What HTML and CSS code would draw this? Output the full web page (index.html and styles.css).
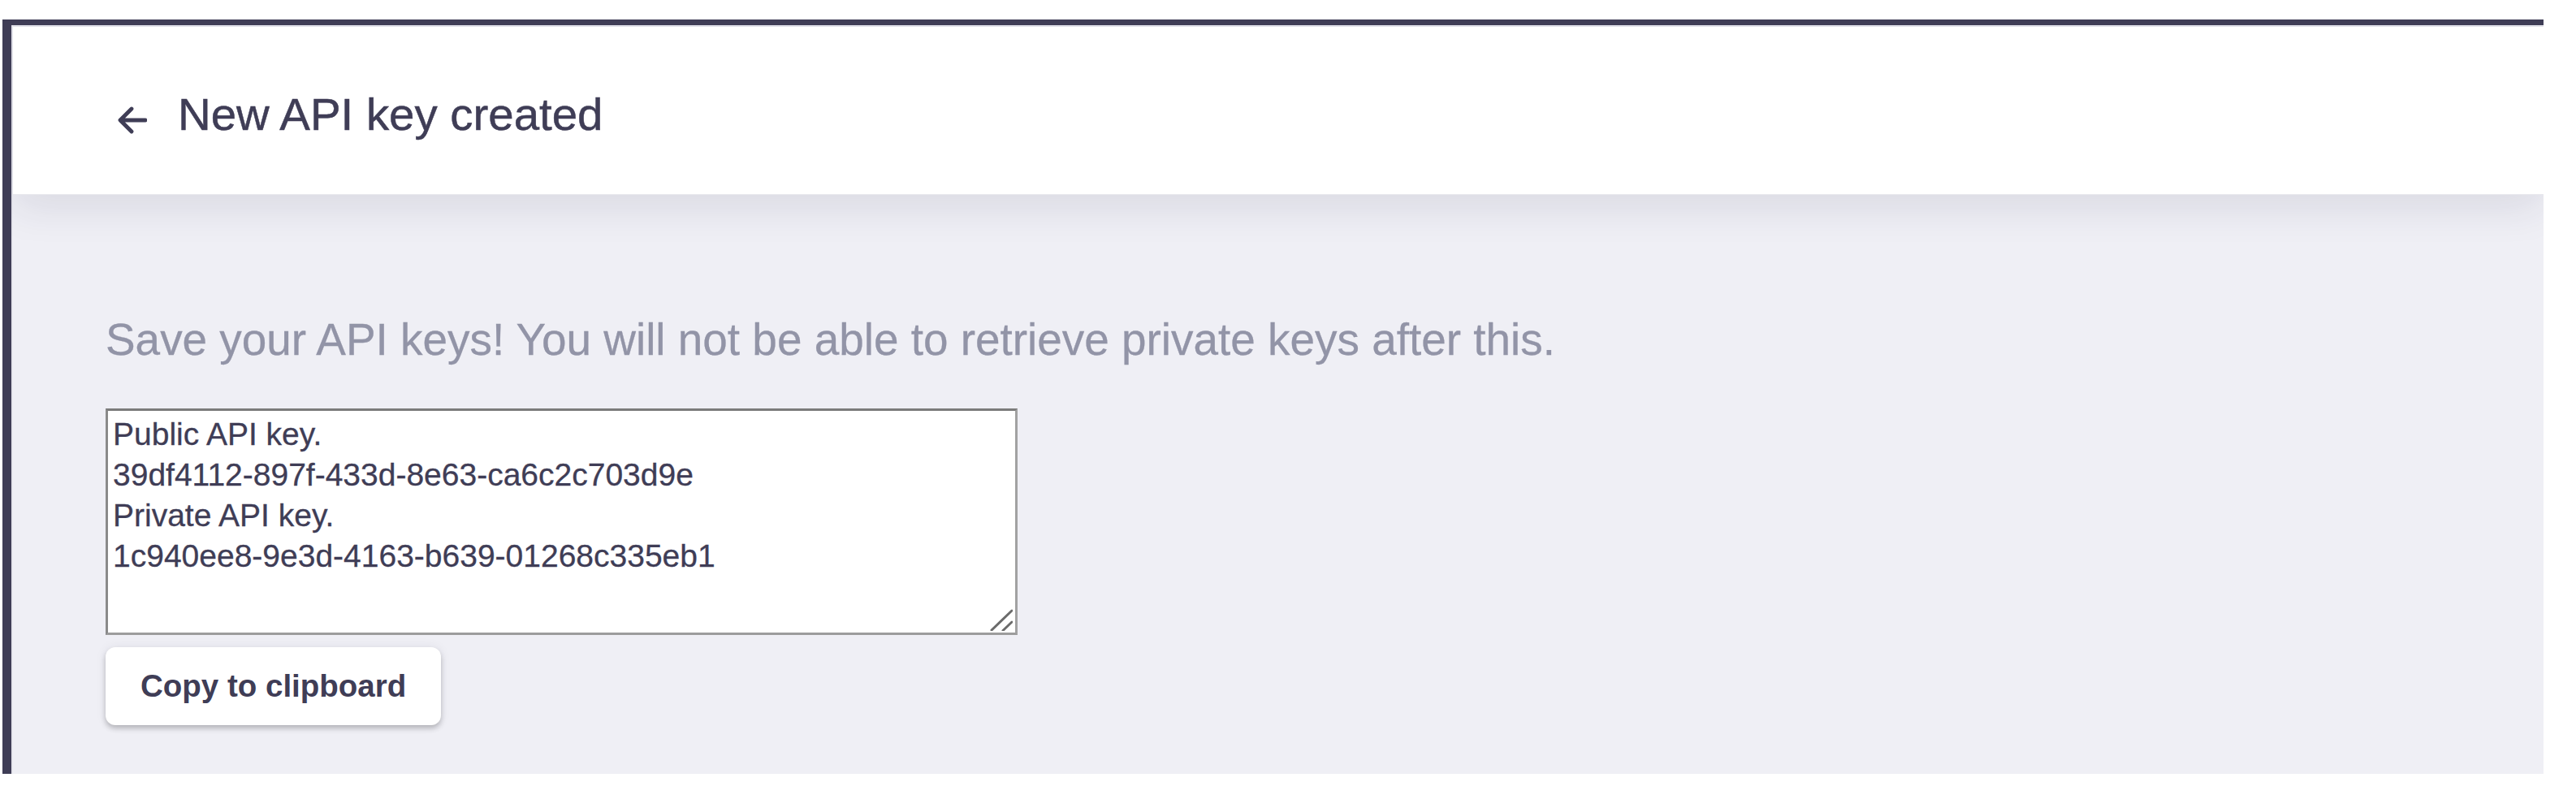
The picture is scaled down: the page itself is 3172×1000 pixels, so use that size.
FILE: index.html
```html
<!DOCTYPE html>
<html lang="en">
<head>
<meta charset="utf-8">
<title>New API key created</title>
<link rel="stylesheet" href="styles.css">
</head>
<body>
<div class="frame">
  <header class="topbar">
    <svg class="back" viewBox="0 0 36 34" width="36" height="34" aria-hidden="true">
      <path d="M34 17 H3 M17 3 L3 17 L17 31" fill="none" stroke="currentColor" stroke-width="4.8" stroke-linecap="round" stroke-linejoin="round"/>
    </svg>
    <h1 class="title">New API key created</h1>
  </header>
  <main class="content">
    <p class="notice">Save your API keys! You will not be able to retrieve private keys after this.</p>
    <div class="keybox">
      <textarea class="keys" readonly>Public API key.
39df4112-897f-433d-8e63-ca6c2c703d9e
Private API key.
1c940ee8-9e3d-4163-b639-01268c335eb1</textarea>
      <svg class="grip" viewBox="0 0 28 28" width="28" height="28" aria-hidden="true">
        <path d="M2 27 L27 3 M16 27.5 L27 17" fill="none" stroke="#6b6b6b" stroke-width="3" stroke-linecap="round"/>
      </svg>
    </div>
    <button class="copy" type="button">Copy to clipboard</button>
  </main>
</div>
</body>
</html>
```
FILE: styles.css
```css
html, body {
  margin: 0;
  padding: 0;
  background: #ffffff;
}

body {
  font-family: "Liberation Sans", Arial, Helvetica, sans-serif;
  color: #3f3d56;
}

.frame {
  box-sizing: border-box;
  margin: 24px 0 0 3px;
  width: 3129px;
  height: 929px;
  border-top: 7px solid #3f3d56;
  border-left: 11px solid #3f3d56;
  padding: 2px 0 0 2px;
  background: #e6e6ed;
  display: flex;
  flex-direction: column;
  overflow: hidden;
}

.topbar {
  position: relative;
  z-index: 1;
  box-sizing: border-box;
  height: 207px;
  flex: none;
  background: #ffffff;
  border-bottom: 1px solid #e8e8ed;
  box-shadow: 0 14px 48px rgba(40, 40, 70, 0.11);
  display: flex;
  align-items: center;
  padding: 11px 0 0 129px;
}

.back {
  color: #3f3d56;
  flex: none;
  margin-top: 12px;
  margin-right: 38px;
}

.title {
  margin: 0;
  font-size: 56.4px;
  font-weight: 400;
  line-height: 1.15;
  color: #3f3d56;
  -webkit-text-stroke: 0.5px #3f3d56;
}

.content {
  flex: 1;
  background: #efeff5;
  padding: 147px 0 0 114px;
  display: flex;
  flex-direction: column;
  align-items: flex-start;
}

.notice {
  margin: 0;
  font-size: 54.9px;
  line-height: 1.15;
  color: #9294a7;
  -webkit-text-stroke: 0.3px #9294a7;
}

.keybox {
  position: relative;
  margin-top: 53px;
  width: 1123px;
  height: 279px;
}

.keys {
  display: block;
  box-sizing: border-box;
  width: 100%;
  height: 100%;
  margin: 0;
  padding: 4px 6px;
  border-style: solid;
  border-width: 3px;
  border-color: #7b7b7b #a2a2a2 #9c9c9c #8a8a8a;
  background: #ffffff;
  font-family: "Liberation Sans", Arial, Helvetica, sans-serif;
  font-size: 39px;
  line-height: 50px;
  color: #3f3d56;
  -webkit-text-stroke: 0.3px #3f3d56;
  resize: none;
  outline: none;
  overflow: hidden;
}

.grip {
  position: absolute;
  right: 6px;
  bottom: 5px;
  pointer-events: none;
}

.copy {
  margin-top: 15px;
  height: 96px;
  padding: 0 43px;
  border: none;
  border-radius: 12px;
  background: #ffffff;
  color: #3f3d56;
  font-family: "Liberation Sans", Arial, Helvetica, sans-serif;
  font-size: 38.5px;
  font-weight: 700;
  box-shadow: 0 4px 6px rgba(0, 0, 0, 0.22), 0 0 14px rgba(40, 40, 70, 0.07);
  cursor: pointer;
}
```
